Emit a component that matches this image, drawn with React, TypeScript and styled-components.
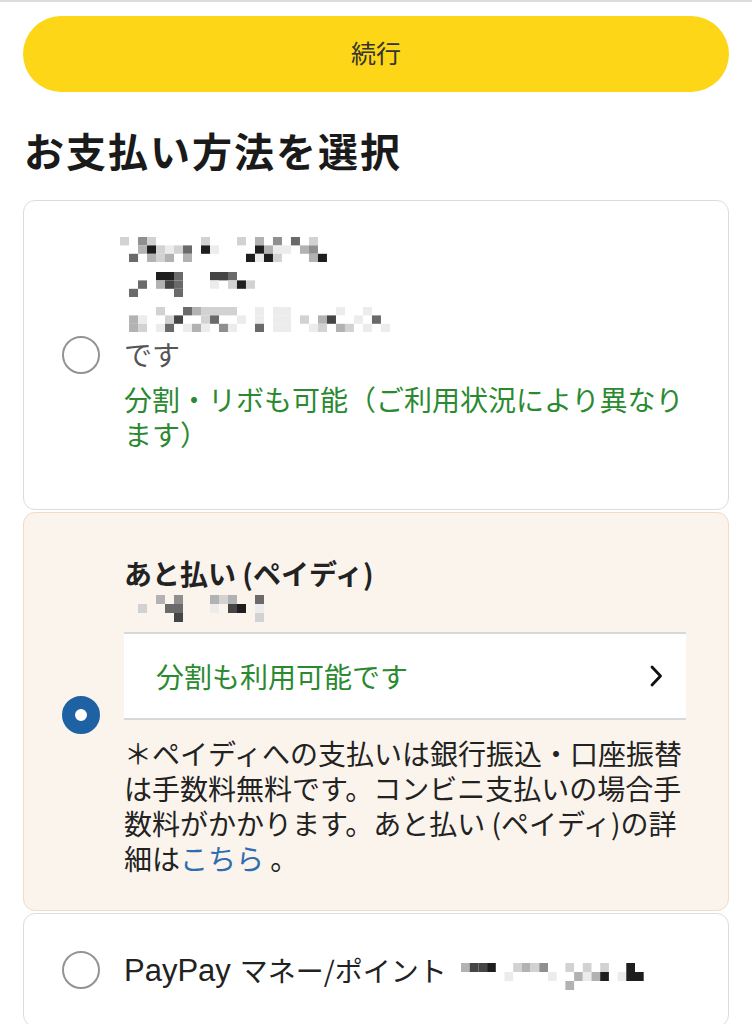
import React from "react";
import styled, { createGlobalStyle } from "styled-components";

const GlobalStyle = createGlobalStyle`
  html, body { margin: 0; padding: 0; background: #ffffff; }
  body {
    font-family: "Noto Sans CJK JP", "Noto Sans", Roboto, sans-serif;
    color: #222222;
    -webkit-font-smoothing: antialiased;
  }
  * { box-sizing: border-box; }
`;

const TopRule = styled.div`
  height: 2px;
  background: #dcdcdc;
`;

const Page = styled.main`
  padding: 14px 23px 0 23px;
  display: flex;
  flex-direction: column;
`;

const ContinueButton = styled.button`
  height: 76px;
  width: 100%;
  border: none;
  border-radius: 38px;
  background: #fcd617;
  color: #333333;
  font-family: "Noto Sans CJK JP", sans-serif;
  font-size: 25px;
  font-weight: 400;
  padding: 0 0 4px 0;
  cursor: pointer;
`;

const Heading = styled.h1`
  margin: 30px 0 22px 1px;
  font-size: 40px;
  line-height: 56px;
  font-weight: 700;
  color: #1a1a1a;
  letter-spacing: 2px;
`;

const CardList = styled.div`
  display: flex;
  flex-direction: column;
  gap: 2px;
`;

const Card = styled.label<{ $selected?: boolean }>`
  display: flex;
  align-items: center;
  gap: 24px;
  padding: 0 42px 0 38px;
  border-radius: 12px;
  border: 1px solid ${(p) => (p.$selected ? "#f0dcc4" : "#dcdcdc")};
  background: ${(p) => (p.$selected ? "#fbf4ec" : "#ffffff")};
`;

const Radio = styled.span<{ $checked?: boolean; $shift?: number }>`
  flex: none;
  width: 38px;
  height: 38px;
  margin-top: ${(p) => (p.$shift ?? 0) * 2}px;
  border-radius: 50%;
  border: ${(p) => (p.$checked ? "13px solid #1f62a4" : "2px solid #939393")};
  background: #ffffff;
`;

const Body = styled.div<{ $pt: number; $pb: number }>`
  flex: 1;
  min-width: 0;
  display: flex;
  flex-direction: column;
  padding: ${(p) => p.$pt}px 0 ${(p) => p.$pb}px 0;
  font-size: 28px;
  line-height: 35px;
`;

const Line = styled.div<{ $tone?: "muted" | "green" | "strong" }>`
  min-height: 35px;
  display: flex;
  align-items: center;
  flex-wrap: wrap;
  color: ${(p) =>
    p.$tone === "muted" ? "#555555" : p.$tone === "green" ? "#2b8a30" : "#222222"};
  font-weight: ${(p) => (p.$tone === "strong" ? 700 : 400)};
`;

const Latin = styled.span`
  font-family: "Liberation Sans", Arial, sans-serif;
  font-size: 31px;
  margin-right: 9px;
`;

const GreenNote = styled.p`
  margin: 10px 0 0 0;
  color: #2b8a30;
`;

const Note = styled.p`
  margin: 16px 0 0 0;
  color: #222222;
`;

const LinkText = styled.a`
  color: #2f6db0;
  text-decoration: none;
`;

const InstallmentRow = styled.div`
  margin-top: 6px;
  height: 88px;
  background: #ffffff;
  border-top: 2px solid #d6d9dc;
  border-bottom: 2px solid #d6d9dc;
  display: flex;
  align-items: center;
  justify-content: space-between;
  padding: 0 22px 0 32px;
  color: #2b8a30;
`;

const Chevron = () => (
  <svg width="16" height="24" viewBox="0 0 16 24" fill="none">
    <path d="M4 3 L12.5 12 L4 21" stroke="#111" strokeWidth="2.8" strokeLinecap="round" strokeLinejoin="round" />
  </svg>
);

const SHADES: Record<string, string> = {
  "1": "#ececec",
  "2": "#d2d2d2",
  "3": "#b2b2b2",
  "4": "#8f8f8f",
  "5": "#6a6a6a",
  "6": "#454545",
  "7": "#1e1e1e",
};

const MosaicSvg = styled.svg<{ $shift?: number }>`
  display: block;
  margin-left: ${(p) => p.$shift ?? 0}px;
`;

function Mosaic({ rows, w, h, shift }: { rows: string[]; w: number; h: number; shift?: number }) {
  const cols = Math.max(...rows.map((r) => r.length));
  const rects: React.ReactNode[] = [];
  rows.forEach((r, y) =>
    r.split("").forEach((c, x) => {
      if (SHADES[c]) rects.push(<rect key={`${x}-${y}`} x={x * w} y={y * h} width={w} height={h} fill={SHADES[c]} />);
    })
  );
  return (
    <MosaicSvg $shift={shift} width={cols * w} height={rows.length * h} viewBox={`0 0 ${cols * w} ${rows.length * h}`}>
      {rects}
    </MosaicSvg>
  );
}

const InlineTail = styled.span`
  margin: 12px 0 0 14px;
  display: inline-flex;
`;

export default function App() {
  return (
    <>
      <GlobalStyle />
      <TopRule />
      <Page>
        <ContinueButton>続行</ContinueButton>
        <Heading>お支払い方法を選択</Heading>
        <CardList>
          <Card>
            <Radio />
            <Body $pt={31} $pb={57}>
              <Line>
                <Mosaic shift={-4} w={9} h={8.4} rows={["2.42.....2...2.3.4.5.2", "..372125.71....7311.34", ".5.323.3......7172...37"]} />
              </Line>
              <Line>
                <Mosaic shift={-4} w={9} h={8.4} rows={["....775...665", "..5.365...1.272", ".5....5"]} />
              </Line>
              <Line>
                <Mosaic shift={-4} w={9} h={8.4} rows={["....2..532222..1.11.....1..1", ".31..26..25..1.1.11.2.36..1.5", ".32.15.131.41..5.11..12.32.1.1"]} />
              </Line>
              <Line $tone="muted">です</Line>
              <GreenNote>分割・リボも可能（ご利用状況により異なります）</GreenNote>
            </Body>
          </Card>
          <Card $selected>
            <Radio $checked $shift={3} />
            <Body $pt={43} $pb={34}>
              <Line $tone="strong">あと払い (ペイディ)</Line>
              <Line>
                <Mosaic shift={14} w={9} h={9} rows={["..3.4...323..5", "2..55...1.67.1", "....6........2"]} />
              </Line>
              <InstallmentRow>
                <span>分割も利用可能です</span>
                <Chevron />
              </InstallmentRow>
              <Note>
                ＊ペイディへの支払いは銀行振込・口座振替は手数料無料です。コンビニ支払いの場合手数料がかかります。あと払い (ペイディ)の詳細は<LinkText href="#">こちら</LinkText> 。
              </Note>
            </Body>
          </Card>
          <Card>
            <Radio />
            <Body $pt={37} $pb={36}>
              <Line>
                <Latin>PayPay</Latin>マネー/ポイント
                <InlineTail>
                  <Mosaic w={8.7} h={9} rows={["3667..2324..2.2.2..7", ".....1....1..3137.177", "............3"]} />
                </InlineTail>
              </Line>
            </Body>
          </Card>
        </CardList>
      </Page>
    </>
  );
}
